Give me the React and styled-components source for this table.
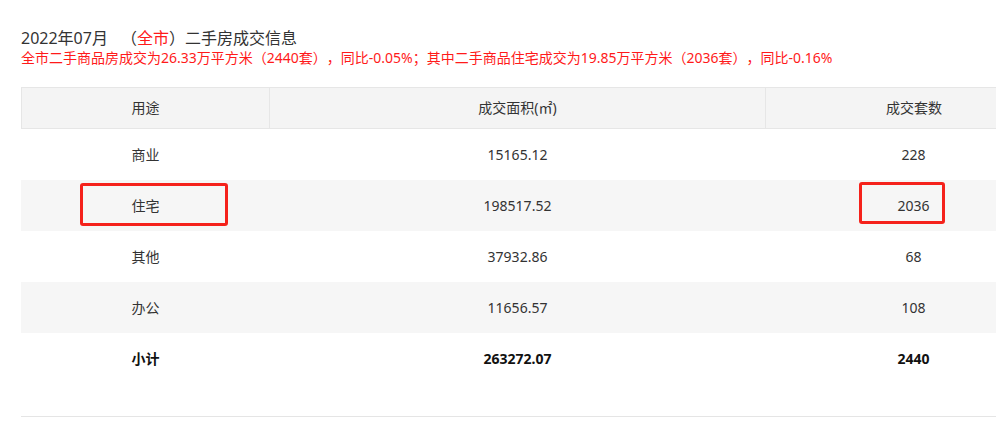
import styled, { createGlobalStyle } from "styled-components";

const GlobalStyle = createGlobalStyle`
  html, body {
    margin: 0;
    padding: 0;
    background: #fff;
    overflow: hidden;
  }
  body {
    font-family: "Noto Sans", "Noto Sans CJK SC", sans-serif;
    color: #333;
    text-spacing-trim: space-all;
  }
`;

const rows = [
  { use: "商业", area: "15165.12", count: "228" },
  { use: "住宅", area: "198517.52", count: "2036", marked: true },
  { use: "其他", area: "37932.86", count: "68" },
  { use: "办公", area: "11656.57", count: "108" },
];

export default function App() {
  return (
    <Page>
      <GlobalStyle />
      <Title>
        2022年07月<City>（<Red>全市</Red>）</City>二手房成交信息
      </Title>
      <Summary>
        全市二手商品房成交为26.33万平方米（2440套），同比-0.05%；其中二手商品住宅成交为19.85万平方米（2036套），同比-0.16%
      </Summary>
      <Table>
        <HeadRow>
          <HeadCell>用途</HeadCell>
          <HeadCell>成交面积(㎡)</HeadCell>
          <HeadCell $last>成交套数</HeadCell>
        </HeadRow>
        {rows.map((r, i) => (
          <Row key={r.use} $shaded={i % 2 === 1}>
            <Cell>
              {r.use}
              {r.marked && <Mark $left={58} $top={3} $width={148} $height={43} />}
            </Cell>
            <Cell>{r.area}</Cell>
            <Cell $last>
              {r.count}
              {r.marked && <Mark $left={93} $top={2} $width={86} $height={42} />}
            </Cell>
          </Row>
        ))}
        <Row $total>
          <Cell>小计</Cell>
          <Cell>263272.07</Cell>
          <Cell $last>2440</Cell>
        </Row>
      </Table>
    </Page>
  );
}

const Page = styled.div`
  padding: 28px 0 0 21px;
`;

const Title = styled.div`
  font-size: 16px;
  line-height: 20px;
  color: #333;
`;

const City = styled.span`
  margin-left: 13px;
`;

const Red = styled.span`
  color: #ff1a1a;
`;

const Summary = styled.div`
  font-size: 14px;
  line-height: 20px;
  color: #ff1a1a;
  white-space: nowrap;
`;

const Table = styled.div`
  margin-top: 19px;
  padding-bottom: 32px;
  border-bottom: 1px solid #e5e5e5;
  font-size: 14px;
  color: #333;
`;

/* the last column runs on past the window edge; its text sits where a 296px column would centre it */
const columns = "248px 496px minmax(0, 1fr)";

const HeadRow = styled.div`
  display: grid;
  grid-template-columns: ${columns};
  background: #f4f4f4;
  border-top: 1px solid #e6e6e6;
  border-bottom: 1px solid #e6e6e6;
  border-left: 1px solid #e6e6e6;
`;

const HeadCell = styled.div`
  height: 40px;
  line-height: 40px;
  text-align: center;
  border-right: ${(p) => (p.$last ? "none" : "1px solid #e6e6e6")};
  padding-left: ${(p) => (p.$last ? "66px" : "0")};
`;

const Row = styled.div`
  display: grid;
  grid-template-columns: ${columns};
  border-left: 1px solid transparent;
  background: ${(p) => (p.$shaded ? "#f6f6f6" : "#fff")};
  font-weight: ${(p) => (p.$total ? 700 : 400)};
  color: ${(p) => (p.$total ? "#111" : "#333")};
`;

const Cell = styled.div`
  position: relative;
  height: 51px;
  line-height: 51px;
  text-align: center;
  padding-right: ${(p) => (p.$last ? "0" : "1px")};
  padding-left: ${(p) => (p.$last ? "65px" : "0")};
`;

const Mark = styled.span`
  position: absolute;
  left: ${(p) => p.$left}px;
  top: ${(p) => p.$top}px;
  width: ${(p) => p.$width}px;
  height: ${(p) => p.$height}px;
  box-sizing: border-box;
  border: 3px solid #f5221b;
  border-radius: 3px;
`;
